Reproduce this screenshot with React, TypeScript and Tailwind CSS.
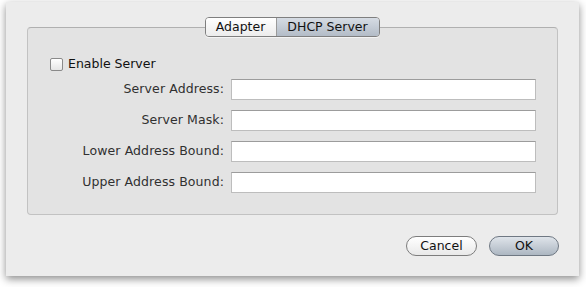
import React from "react"

const font = { fontFamily: '"DejaVu Sans", "Lucida Grande", sans-serif' }

function Field({ label }: { label: string }) {
  return (
    <div className="flex items-center h-[21px]">
      <div className="w-[197px] text-right text-[12.5px] tracking-[0.1px] text-[#303030] pr-[1px]">{label}</div>
      <div className="ml-[6px] w-[305px] h-[21px] bg-white border border-[#bdbdbd] border-t-[#9c9c9c]" />
    </div>
  )
}

export default function App() {
  return (
    <div className="w-[586px] h-[287px] bg-white pt-[2px] pl-[6px]" style={font}>
      <div className="w-[573px] h-[274px] bg-[#ececec] shadow-[0_3px_8px_rgba(0,0,0,0.45)] pt-[15px] px-[21px] flex flex-col">
        <div className="flex justify-center relative z-10 pr-[1px]">
          <div className="flex h-[20px] rounded-[4px] border border-[#7f7f7f] overflow-hidden text-[12.5px] text-[#111] shadow-[0_1px_0_rgba(255,255,255,0.6)]">
            <div className="w-[71px] flex items-center justify-center bg-gradient-to-b from-white to-[#ececec] border-r border-[#9a9a9a]">Adapter</div>
            <div className="w-[102px] flex items-center justify-center bg-gradient-to-b from-[#d6dce4] to-[#b3bcc7]">DHCP Server</div>
          </div>
        </div>
        <div className="-mt-[10px] w-[531px] h-[188px] bg-[#e3e3e3] border border-[#c2c2c2] border-t-[#b0b0b0] rounded-[4px] flex flex-col">
          <label className="flex items-center mt-[29px] ml-[22px] h-[14px] text-[12.5px] text-[#111]">
            <span className="w-[13px] h-[13px] rounded-[2px] border border-[#8a8a8a] bg-gradient-to-b from-white to-[#e6e6e6]" />
            <span className="ml-[5px]">Enable Server</span>
          </label>
          <div className="mt-[8px] flex flex-col gap-[10px]">
            <Field label="Server Address:" />
            <Field label="Server Mask:" />
            <Field label="Lower Address Bound:" />
            <Field label="Upper Address Bound:" />
          </div>
        </div>
        <div className="flex justify-end mt-[21px] gap-[12px]">
          <button className="w-[71px] h-[20px] rounded-full border border-[#7d7d7d] bg-gradient-to-b from-white to-[#e9e9e9] text-[12.5px] text-[#111] leading-none">Cancel</button>
          <button className="w-[70px] h-[20px] rounded-full border border-[#6f7883] bg-gradient-to-b from-[#dfe4ea] to-[#adb7c2] text-[12.5px] text-[#111] leading-none mr-[-1px]">OK</button>
        </div>
      </div>
    </div>
  )
}
